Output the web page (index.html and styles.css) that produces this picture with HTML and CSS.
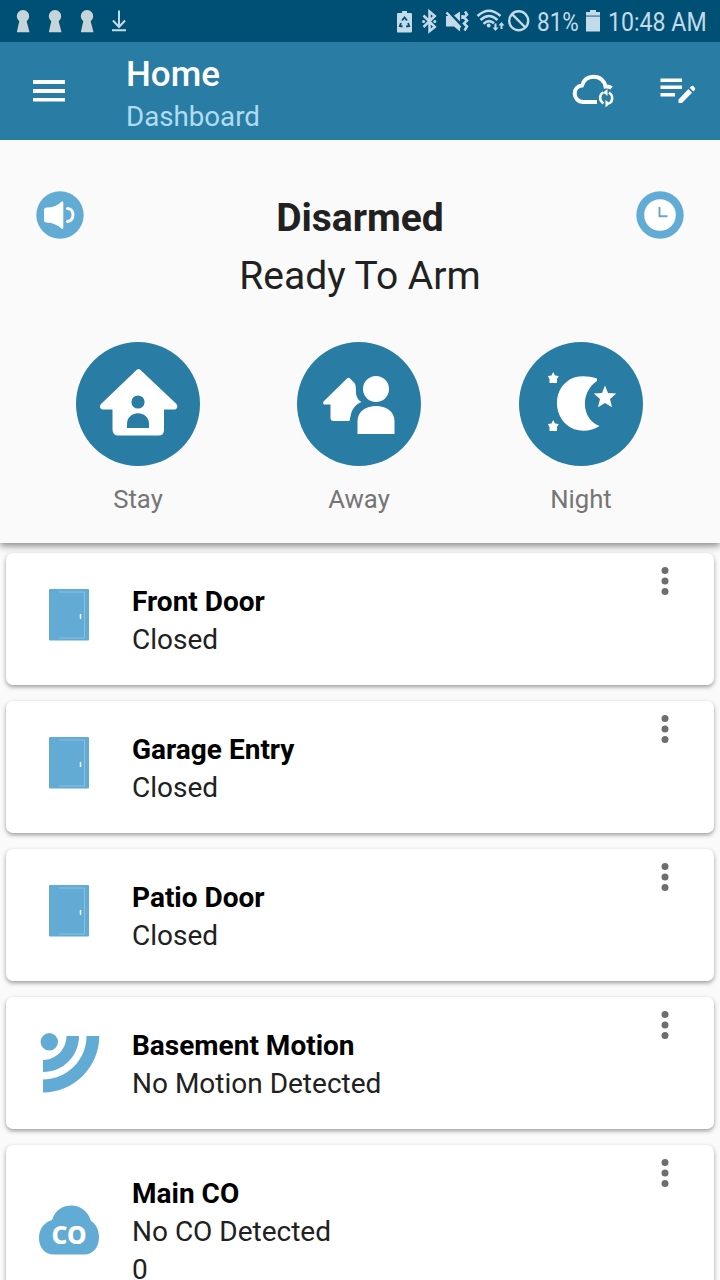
FILE: index.html
```
<!DOCTYPE html>
<html lang="en">
<head>
    <meta charset="UTF-8">
    <meta name="viewport" content="width=device-width, initial-scale=1.0">
    <title>Dashboard</title>
    <link rel="stylesheet" href="styles.css">
</head>
<body>
    <div class="status-bar">
        <div class="status-left">
            <svg class="keyhole" width="14" height="42" viewBox="16 0 14 42"><path d="M19.3 21.200A6.200 6.200 0 1 1 26.700 21.200L29.500 32.300H16.800Z"/></svg>
            <svg class="keyhole" width="14" height="42" viewBox="16 0 14 42"><path d="M19.3 21.200A6.200 6.200 0 1 1 26.700 21.200L29.500 32.300H16.800Z"/></svg>
            <svg class="keyhole" width="14" height="42" viewBox="16 0 14 42"><path d="M19.3 21.200A6.200 6.200 0 1 1 26.700 21.200L29.500 32.300H16.800Z"/></svg>
            <svg class="line-icon" width="16" height="42" viewBox="111 0 16 42"><path d="M119 10.5V27M113 20.5L119 27L125 20.5M112 30.3H126"/></svg>
        </div>
        <div class="status-right">
            <svg width="16" height="42" viewBox="397 0 16 42">
                <path d="M402 11h5v2h4a1 1 0 0 1 1 1v17.500a1 1 0 0 1-1 1h-13a1 1 0 0 1-1-1V14a1 1 0 0 1 1-1h4z"/>
                <path class="recycle" d="M402 20.500l2.500-3 2.500 3M408 23l1.200 3-3 .5M402.500 26.500l-2.700-.5 1.200-3"/>
            </svg>
            <svg class="line-icon bluetooth" width="15" height="42" viewBox="422 0 15 42"><path d="M423.500 15.500L434.800 26.800L429.500 31.200V11.500L434.800 16L423.500 27"/><circle class="dot" cx="423.600" cy="21.400" r="1.500"/><circle class="dot" cx="434.800" cy="21.400" r="1.500"/></svg>
            <svg class="mute" width="24" height="42" viewBox="445 0 24 42">
                <path d="M446 16h3l11 11v4.500l-6-5h-8zM454 15.500l6-4v10z"/>
                <path class="thin" d="M446.500 12.500L460.500 27.500M465 11.500l2 3-3 3 3 3-3 3 3 3-2.500 4M462.500 15v4"/>
            </svg>
            <svg class="wifi" width="29" height="42" viewBox="476 0 29 42">
                <path class="thin" d="M477.500 16Q489 5.500 500.500 16M480.500 20Q489 12 497.500 20M483.500 23.800Q489 18.800 494 23.300"/>
                <circle cx="488.700" cy="25.500" r="1.900"/>
                <path d="M494.500 23.500h2v4h2l-3 3.500-3-3.500h2zM500.500 29h2v-3.500h2l-3-3.500-3 3.500h2z"/>
            </svg>
            <svg class="line-icon blocked" width="22" height="42" viewBox="508 0 22 42"><circle cx="518.700" cy="20.800" r="9.500"/><path d="M512 14.200L525.400 27.500"/></svg>
            <span class="percent">81%</span>
            <svg class="battery" width="15" height="42" viewBox="586 0 15 42">
                <path opacity=".6" d="M590 10h6v2h4v4h-14v-4h4z"/>
                <path d="M590 10h6v2h4v3h-14v-3h4zM586 16.500h14v15h-14z"/>
            </svg>
            <span class="time">10:48 AM</span>
        </div>
    </div>

    <div class="header">
        <svg class="menu-icon" width="32" height="22" viewBox="0 0 32 22"><path d="M0 0h32v4H0zM0 9h32v4H0zM0 18h32v3.500H0z"/></svg>
        <div class="header-title">
            <div class="title">Home</div>
            <div class="subtitle">Dashboard</div>
        </div>
        <svg class="cloud-icon" width="44" height="36" viewBox="571 75 44 36">
            <path class="outline" d="M597 104H583.500C578 104 574.700 100 574.700 95.500C574.700 91 577.500 88 582 87.500C584 81 588.500 78.800 593.500 78.800C600 78.800 604.500 83 605.500 88.500Q609 88 611.500 90"/>
            <path class="sync" d="M603.500 105.500C598.800 102.500 599.300 96.500 603.300 94.500M609 94.500C613.500 97.500 613 103.500 609 105.500"/>
            <path d="M607.500 91V98L603 94.500zM605.500 102V109.500L610 105.500z"/>
        </svg>
        <svg class="edit-icon" width="36" height="27" viewBox="660 80 36 27"><path d="M660.500 80.500H682V84H660.500zM660.500 87.500H682V91H660.500zM660.500 95H675V98.500H660.500zM678.500 101.500L688.500 91L692 94.700L682 105H678.500zM689.700 89.800L691.500 88Q692.500 87.500 693.500 88.300L695 90Q695.500 91 694.800 92L693.200 93.500z"/></svg>
    </div>

    <div class="arming">
        <div class="arming-state">
            <svg width="48" height="48" viewBox="0 0 48 48">
                <circle class="light" cx="24" cy="24" r="23.700"/>
                <path class="white" d="M8 19Q8 16.500 10.500 16.500Q20 16.500 26 10.200Q27.300 10.200 27.300 12V36.500Q27.300 38 26 38Q20 32 10.500 31.500Q8 31.500 8 29.500z"/>
                <path class="wave" d="M31.500 17.500C38.800 17.500 38.800 30 31.500 30.500"/>
            </svg>
            <div class="state-text">
                <div class="state">Disarmed</div>
                <div class="ready">Ready To Arm</div>
            </div>
            <svg width="48" height="48" viewBox="0 0 48 48">
                <circle class="light" cx="24" cy="24" r="23.700"/>
                <circle class="white" cx="24" cy="24" r="15.800"/>
                <path class="hands" d="M23.500 16V25.300H31.500"/>
            </svg>
        </div>
        <div class="modes">
            <div class="mode">
                <svg width="124" height="124" viewBox="0 0 124 124">
                    <circle class="dark" cx="62" cy="62" r="62"/>
                    <path class="white" d="M60.500 28Q62.500 26 64.500 28L100.500 62Q102 64 101 66Q100 67.500 98 67.500H88V88Q88 93.500 82.500 93.500H42.500Q36.500 93.500 36.500 87.500V67.500H27Q24.500 67.500 24 65.500Q23.500 63.500 25 62z"/>
                    <circle class="dark" cx="62" cy="60" r="6.600"/>
                    <path class="dark" d="M51 86V82C51 67.500 73 67.500 73 82V86z"/>
                </svg>
                <span>Stay</span>
            </div>
            <div class="mode">
                <svg width="124" height="124" viewBox="0 0 124 124">
                    <circle class="dark" cx="62" cy="62" r="62"/>
                    <path class="white" d="M50 36.500Q51.500 35.200 53 36.500L57.500 41C58.800 43 58.800 44.500 59 50C59 55 61.500 58.500 64.500 60C58 62.500 55 68 54 72L52.500 79H36.500Q33.500 79 33.500 76V62.500H27Q25 61 26.500 59.500z"/>
                    <circle class="white" cx="79" cy="47" r="13"/>
                    <path class="white" d="M60.500 92V79C60.500 59 97.500 59 97.500 79V92z"/>
                </svg>
                <span>Away</span>
            </div>
            <div class="mode">
                <svg width="124" height="124" viewBox="0 0 124 124">
                    <circle class="dark" cx="62" cy="62" r="62"/>
                    <path class="white" d="M78 36.500C66 33 55 33.500 47.500 40C34.500 50 35 72 47.500 82.500C56 90.500 71 90.500 80.500 84C62 77 61 50 78 39z"/>
                    <path class="white" d="M86 43.500L89 51L97.300 51.500L91 57L93 65.200L86 61L79 65.200L81 57L74.800 51.500L83 51z"/>
                    <path class="white" d="M34.200 30L36 33.500L39.700 34L38 37L38 41H30.500L30.500 37L28.800 34L32.500 33.500z"/>
                    <path class="white" d="M34.200 78L36 81.500L39.700 82L38 85L38 89H30.500L30.500 85L28.800 82L32.500 81.500z"/>
                </svg>
                <span>Night</span>
            </div>
        </div>
    </div>

    <div class="devices">
        <div class="card">
            <svg class="device-icon" width="64" height="64" viewBox="0 0 64 64"><rect class="light" x="12" y="2" width="40" height="51.500" rx="1"/><path class="door-line" d="M22 5H47.500V51H22"/><path class="handle" d="M43.500 27v5"/></svg>
            <div class="device-text">
                <div class="device-name">Front Door</div>
                <div>Closed</div>
            </div>
            <svg class="more" width="8" height="28" viewBox="0 0 8 28"><circle cx="4" cy="3.500" r="3.500"/><circle cx="4" cy="14" r="3.500"/><circle cx="4" cy="24.500" r="3.500"/></svg>
        </div>
        <div class="card">
            <svg class="device-icon" width="64" height="64" viewBox="0 0 64 64"><rect class="light" x="12" y="2" width="40" height="51.500" rx="1"/><path class="door-line" d="M22 5H47.500V51H22"/><path class="handle" d="M43.500 27v5"/></svg>
            <div class="device-text">
                <div class="device-name">Garage Entry</div>
                <div>Closed</div>
            </div>
            <svg class="more" width="8" height="28" viewBox="0 0 8 28"><circle cx="4" cy="3.500" r="3.500"/><circle cx="4" cy="14" r="3.500"/><circle cx="4" cy="24.500" r="3.500"/></svg>
        </div>
        <div class="card">
            <svg class="device-icon" width="64" height="64" viewBox="0 0 64 64"><rect class="light" x="12" y="2" width="40" height="51.500" rx="1"/><path class="door-line" d="M22 5H47.500V51H22"/><path class="handle" d="M43.500 27v5"/></svg>
            <div class="device-text">
                <div class="device-name">Patio Door</div>
                <div>Closed</div>
            </div>
            <svg class="more" width="8" height="28" viewBox="0 0 8 28"><circle cx="4" cy="3.500" r="3.500"/><circle cx="4" cy="14" r="3.500"/><circle cx="4" cy="24.500" r="3.500"/></svg>
        </div>
        <div class="card">
            <svg class="device-icon" width="64" height="64" viewBox="0 0 64 64">
                <circle class="light" cx="12.300" cy="10.800" r="8.700"/>
                <path class="light" d="M29.500 5H42C42 25 26 41 6 41V29C19 29 29.500 18 29.500 5z"/>
                <path class="light" d="M49.500 5H62.300C62.300 36 37 61.500 6 61.500V48.500C30 48.500 49.500 29 49.500 5z"/>
            </svg>
            <div class="device-text">
                <div class="device-name">Basement Motion</div>
                <div>No Motion Detected</div>
            </div>
            <svg class="more" width="8" height="28" viewBox="0 0 8 28"><circle cx="4" cy="3.500" r="3.500"/><circle cx="4" cy="14" r="3.500"/><circle cx="4" cy="24.500" r="3.500"/></svg>
        </div>
        <div class="card">
            <svg class="device-icon" width="64" height="64" viewBox="0 0 64 64">
                <path class="light" d="M17 56.500C7.500 56.500 2 49 2 40C2 31 7 24.500 15 22C19 11 26 7.500 34.500 7.500C43 7.500 51 13 54 23C59 26 62 32 62 39C62 49 56.500 56.500 47 56.500z"/>
                <text class="co-label" x="14.500" y="46" textLength="35" lengthAdjust="spacingAndGlyphs">CO</text>
            </svg>
            <div class="device-text">
                <div class="device-name">Main CO</div>
                <div>No CO Detected</div>
                <div>0</div>
            </div>
            <svg class="more" width="8" height="28" viewBox="0 0 8 28"><circle cx="4" cy="3.500" r="3.500"/><circle cx="4" cy="14" r="3.500"/><circle cx="4" cy="24.500" r="3.500"/></svg>
        </div>
    </div>
</body>
</html>
```
FILE: styles.css
```
body {
    margin: 0;
    height: 1280px;
    overflow: hidden;
    font-family: Roboto, sans-serif;
    background-color: #fafafa;
    color: #212121;
}
svg {
    display: block;
    flex-shrink: 0;
}
.status-bar {
    display: flex;
    justify-content: space-between;
    height: 42px;
    padding: 0 14px 0 16px;
    background-color: #005076;
    color: #c3dbe8;
    fill: #c3dbe8;
}
.status-left, .status-right {
    display: flex;
    align-items: center;
}
.keyhole {
    margin-right: 18px;
    fill: #c5d5da;
}
.status-left .line-icon {
    margin-left: -1px;
}
.line-icon {
    fill: none;
    stroke: #c3dbe8;
    stroke-width: 2;
}
.line-icon .dot {
    fill: #c3dbe8;
    stroke: none;
}
.recycle {
    fill: none;
    stroke: #005076;
    stroke-width: 1.8;
}
.thin {
    fill: none;
    stroke: #c3dbe8;
    stroke-width: 2.5;
}
.bluetooth {
    margin-left: 9px;
    stroke-width: 2.5;
}
.mute {
    margin-left: 8px;
}
.wifi {
    margin-left: 7px;
}
.blocked {
    margin-left: 3px;
    stroke-width: 2.4;
}
.percent, .time {
    font-size: 25px;
    line-height: 42px;
    padding-top: 3px;
    white-space: nowrap;
    transform-origin: left;
}
.percent {
    width: 42px;
    margin-left: 7px;
    transform: scaleX(0.9);
}
.battery {
    margin-left: 7px;
}
.time {
    width: 98px;
    margin-left: 7px;
    transform: scaleX(0.925);
}
.header {
    display: flex;
    position: relative;
    z-index: 1;
    align-items: center;
    height: 98px;
    box-sizing: border-box;
    padding: 0 24px 0 33px;
    background-color: #297ca4;
    color: #fff;
    fill: #fff;
}
.header-title {
    flex: 1;
    margin-left: 61px;
    padding-top: 10px;
}
.title {
    font-size: 35px;
    font-weight: 500;
    line-height: 42px;
}
.subtitle {
    font-size: 27.700px;
    line-height: 42px;
    color: #b0dcf2;
}
.cloud-icon {
    margin-right: 45px;
}
.cloud-icon .outline {
    fill: none;
    stroke: #fff;
    stroke-width: 4;
}
.cloud-icon .sync {
    fill: none;
    stroke: #fff;
    stroke-width: 2.5;
}
.arming {
    position: relative;
    height: 403px;
    box-sizing: border-box;
    padding-top: 50px;
    background-color: #fafafa;
    box-shadow: 0 2px 8px rgba(0, 0, 0, 0.55);
}
.arming-state {
    display: flex;
    justify-content: space-between;
    height: 151.500px;
    padding: 0.500px 35.500px 0;
}
.state-text {
    text-align: center;
    font-size: 39px;
    line-height: 58px;
    margin-top: -2px;
}
.state {
    font-weight: 700;
}
.light {
    fill: #61abd4;
}
.dark {
    fill: #297ca4;
}
.white {
    fill: #fff;
}
.wave {
    fill: none;
    stroke: #fff;
    stroke-width: 3;
    stroke-linecap: round;
}
.hands {
    fill: none;
    stroke: #6fa6c8;
    stroke-width: 2;
}
.modes {
    display: flex;
    gap: 97px;
    padding-left: 76px;
}
.mode:last-child {
    margin-left: 1px;
}
.mode {
    display: flex;
    flex-direction: column;
    align-items: center;
    gap: 16px;
    font-size: 25.700px;
    line-height: 35px;
    color: #757575;
}
.devices {
    display: flex;
    flex-direction: column;
    gap: 16px;
    padding: 10px 6px;
}
.card {
    display: flex;
    align-items: center;
    box-sizing: border-box;
    padding: 28px 45px 28px 31px;
    border-radius: 7px;
    background-color: #fff;
    box-shadow: 0 2px 4px rgba(0, 0, 0, 0.38);
    flex-shrink: 0;
}
.device-text {
    flex: 1;
    margin: 2px 0 -2px 31px;
    font-size: 28px;
    line-height: 38px;
}
.device-name {
    font-weight: 700;
    color: #000;
}
.door-line {
    fill: none;
    stroke: #8dc2df;
    stroke-width: 1;
}
.handle {
    fill: none;
    stroke: #fff;
    stroke-width: 1.5;
}
.co-label {
    font-family: "Noto Sans", sans-serif;
    font-size: 24px;
    font-weight: 800;
    fill: #fff;
}
.more {
    align-self: flex-start;
    margin-top: -14px;
    fill: #6e6e6e;
}
```
